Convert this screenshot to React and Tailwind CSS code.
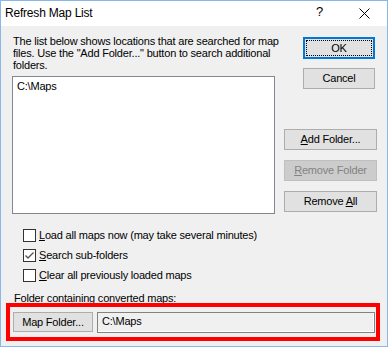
import React from "react";

const Btn = ({ children, className = "", disabled = false }) => (
  <div
    className={
      "flex items-center justify-center border " +
      (disabled
        ? "bg-[#cccccc] border-[#bfbfbf] text-[#838383] "
        : "bg-[#e1e1e1] border-[#adadad] text-black ") +
      className
    }
  >
    <span className="whitespace-nowrap">{children}</span>
  </div>
);

const Check = ({ checked, children }) => (
  <div className="flex items-center h-[13px]">
    <div className="w-[13px] h-[13px] border border-[#333333] bg-white flex items-center justify-center">
      {checked && (
        <svg width="11" height="11" viewBox="0 0 11 11">
          <path d="M1.5 5.5 L4 8 L9.5 2.5" stroke="#555" strokeWidth="1.4" fill="none" />
        </svg>
      )}
    </div>
    <span className="ml-[3px] whitespace-nowrap">{children}</span>
  </div>
);

export default function App() {
  return (
    <div
      className="w-[388px] h-[347px] border border-[#88b7e9] bg-[#f0f0f0] flex flex-col text-black overflow-hidden text-[11px] tracking-[-0.2px] leading-[13px]"
      style={{ fontFamily: '"Liberation Sans", Arial, sans-serif' }}
    >
      <div className="h-[25px] bg-white flex items-center shrink-0 relative">
        <span className="ml-[4px] text-[12px] tracking-[-0.2px]">Refresh Map List</span>
        <span className="absolute left-[315px] top-[4px] text-[13px]">?</span>
        <svg className="absolute left-[358px] top-[7px]" width="11" height="11" viewBox="0 0 11 11">
          <path d="M0.5 0.5 L10.5 10.5 M10.5 0.5 L0.5 10.5" stroke="#000" strokeWidth="1" />
        </svg>
      </div>
      <div className="flex flex-col pl-[11px] pr-[10px]">
        <div className="flex">
          <div className="flex flex-col w-[263px]">
            <p className="mt-[9px] ml-[1px] w-[274px] leading-[12px]">
              The list below shows locations that are searched for map files. Use the "Add Folder..." button to search additional folders.
            </p>
            <div className="mt-[5px] h-[138px] border border-[#828790] bg-white px-[4px] pt-[3px]">
              C:\Maps
            </div>
          </div>
          <div className="flex flex-col flex-1 items-end ml-[8px]">
            <div className="mt-[11px] mr-[2px] w-[72px] h-[22px] border-2 border-[#0078d7] bg-[#e1e1e1] p-[1px]">
              <div className="w-full h-full border border-dotted border-black flex items-center justify-center">
                OK
              </div>
            </div>
            <Btn className="mt-[9px] mr-[2px] w-[72px] h-[21px]">Cancel</Btn>
            <Btn className="mt-[40px] w-[93px] h-[21px]">
              <u>A</u>dd Folder...
            </Btn>
            <Btn disabled className="mt-[10px] w-[93px] h-[21px]">
              <u>R</u>emove Folder
            </Btn>
            <Btn className="mt-[10px] w-[93px] h-[21px]">
              Remove <u>A</u>ll
            </Btn>
          </div>
        </div>
        <div className="flex flex-col gap-[7px] ml-[11px] mt-[15px]">
          <Check>
            <u>L</u>oad all maps now (may take several minutes)
          </Check>
          <Check checked>
            <u>S</u>earch sub-folders
          </Check>
          <Check>
            <u>C</u>lear all previously loaded maps
          </Check>
        </div>
        <div className="mt-[10px] ml-[2px] leading-[12px]">Folder containing converted maps:</div>
      </div>
      <div className="-mt-[1px] ml-[5px] w-[374px] h-[38px] border-4 border-[#ff0000] flex items-center pl-[3px] pr-[1px]">
        <Btn className="w-[80px] h-[20px]">Map Folder...</Btn>
        <div className="ml-[4px] flex-1 h-[21px] border border-[#828282] bg-[#f0f0f0] flex items-center">
          <div className="w-full h-full border-b border-r border-white flex items-center pl-[4px]">C:\Maps</div>
        </div>
      </div>
    </div>
  );
}
